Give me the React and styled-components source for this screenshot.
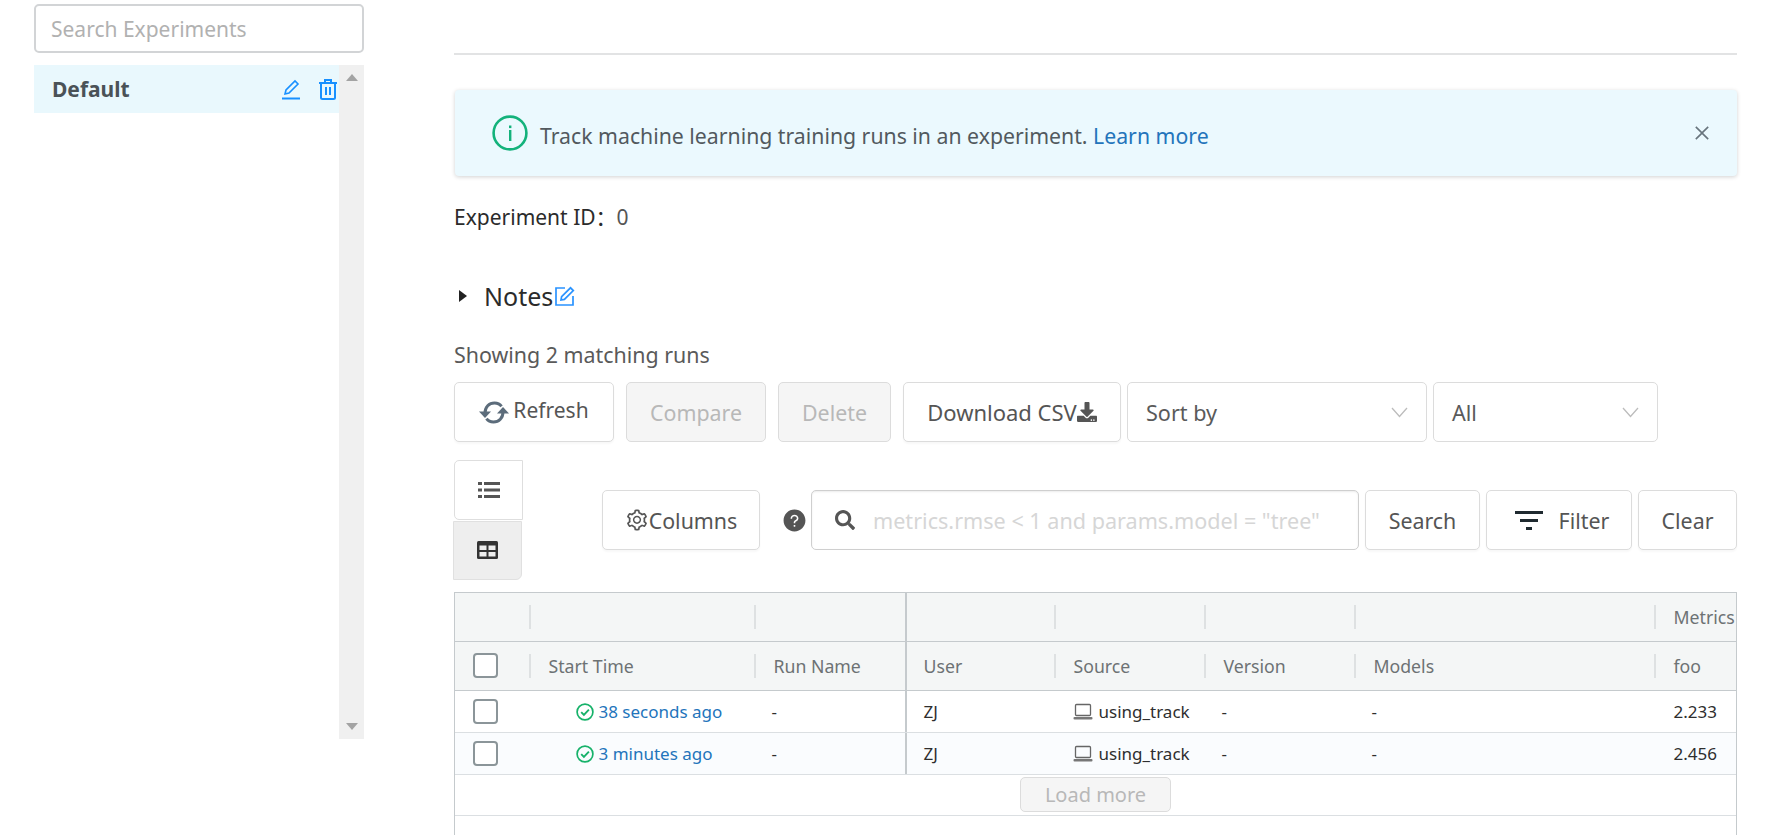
import React from "react";
import styled, { createGlobalStyle } from "styled-components";
import { FaDownload, FaSearch } from "react-icons/fa";
import { AiOutlineSetting, AiFillQuestionCircle, AiOutlineClose } from "react-icons/ai";

const Global = createGlobalStyle`
  html, body { margin: 0; padding: 0; background: #fff; }
  body { font-family: "Noto Sans", "Open Sans", sans-serif; color: #555; overflow: hidden; }
  * { box-sizing: border-box; }
`;

const Page = styled.div`
  display: flex; width: 1786px; height: 835px; padding-left: 34px; gap: 90px; overflow: hidden;
`;
const Sidebar = styled.aside`
  width: 330px; flex: none; padding-top: 4px; display: flex; flex-direction: column; gap: 12px;
`;
const SearchBox = styled.div`
  height: 49px; border: 2px solid #d2d4d6; border-radius: 5px; display: flex; align-items: center;
  padding-left: 15px; font-size: 21px; color: #b1b1b1; flex: none;
`;
const ListWrap = styled.div`
  display: flex; height: 674px; flex: none;
`;
const List = styled.div` flex: 1; min-width: 0; `;
const ListItem = styled.div`
  height: 48px; background: #e9f8fd; display: flex; align-items: center; padding-left: 18px;
  font-size: 21px; font-weight: 700; color: #4a5257;
`;
const ItemName = styled.span` flex: 1; `;
const ItemIcons = styled.span`
  display: flex; align-items: center; gap: 17px; color: #1890ff; padding-right: 1px;
`;
const Scrollbar = styled.div`
  width: 25px; background: #f0f0f0; display: flex; flex-direction: column; justify-content: space-between;
  align-items: center; padding: 9px 0 9px;
`;
const ScrollArrow = styled.i`
  width: 0; height: 0; border-left: 6px solid transparent; border-right: 6px solid transparent;
  ${p => p.$down ? "border-top: 7px solid #a3a3a3;" : "border-bottom: 7px solid #a3a3a3;"}
`;
const Main = styled.main`
  width: 1283px; flex: none; padding-top: 53px; display: flex; flex-direction: column;
  & > * { flex: none; }
`;
const Rule = styled.hr`
  margin: 0; height: 2px; border: 0; background: #e2e3e4;
`;
const Alert = styled.div`
  margin-top: 35px; height: 86px; background: #ebf9fe; border-radius: 4px; box-shadow: 0 1px 4px rgba(0,0,0,.18);
  display: flex; align-items: center; padding: 0 25px 0 37px; font-size: 21.25px; color: #52595e; margin-left: 1px;
`;
const AlertText = styled.span` flex: 1; margin-left: 12px; padding-top: 5px; `;
const LinkText = styled.a` color: #2374bb; `;
const CloseBtn = styled.span` display: flex; color: #68757d; `;
const ExpId = styled.div`
  margin-top: 27px; font-size: 21px; line-height: 27px; color: #2b2b2b; height: 27px;
`;
const ExpColon = styled.span` font-family: "Noto Sans CJK SC", sans-serif; `;
const ExpValue = styled.span` color: #555; `;
const Notes = styled.div`
  margin-top: 48px; height: 36px; display: flex; align-items: center; font-size: 25px; color: #2b2b2b;
`;
const Caret = styled.i`
  width: 0; height: 0; border-top: 6.5px solid transparent; border-bottom: 6.5px solid transparent;
  border-left: 8px solid #222; margin: 0 17px 0 5px;
`;
const NoteIconWrap = styled.span` display: flex; margin-left: 2px; `;
const Showing = styled.div`
  margin-top: 27px; height: 28px; line-height: 28px; font-size: 21.4px; color: #5a5a5a;
`;
const ToolRow = styled.div`
  margin-top: 13px; display: flex; height: 60px;
`;
const Btn = styled.button`
  font: inherit; font-size: ${p => p.$fs || 21.4}px; height: 60px; width: ${p => p.$w}px; margin-left: ${p => p.$ml || 0}px; flex: none;
  border: 1.5px solid #dcdcdc; border-radius: 5px; background: ${p => p.disabled ? "#f5f5f5" : "#fff"};
  color: ${p => p.disabled ? "#b8b8b8" : "#555"}; display: flex; align-items: center; justify-content: center;
  padding: 0; box-shadow: ${p => p.disabled ? "none" : "0 2px 2px rgba(0,0,0,.03)"};
`;
const RefreshLabel = styled.span` padding-bottom: 4px; margin-left: 4px; `;
const Select = styled.div`
  height: 60px; width: ${p => p.$w}px; margin-left: ${p => p.$ml}px; border: 1.5px solid #dcdcdc; border-radius: 5px;
  display: flex; align-items: center; justify-content: space-between; padding: 0 18px 0 18px; font-size: 21.6px; color: #5a5a5a;
`;
const SecondRow = styled.div`
  margin-top: 18px; display: flex; height: 120px; position: relative;
`;
const ViewToggle = styled.div`
  width: 70px; display: flex; flex-direction: column; flex: none;
`;
const ViewBtn = styled.div`
  width: 69px; height: 60px; display: flex; align-items: center; justify-content: center;
  border: 1.5px solid ${p => p.$active ? "#e0e0e0" : "#dedede"}; color: ${p => p.$active ? "#333" : "#555"};
  background: ${p => p.$active ? "#eee" : "#fff"};
  border-radius: ${p => p.$active ? "0 0 6px 0" : "5px 0 0 5px"};
  margin: ${p => p.$active ? "1px 0 0 -1px" : "0"};
`;
const FilterBar = styled.div`
  display: flex; align-items: flex-start; margin-left: 78px; padding-top: 30px;
`;
const Help = styled.span` display: flex; color: #555; margin: 18px 0 0 22px; `;
const QueryBox = styled.div`
  width: 548px; height: 60px; margin-left: 4px; border: 1.5px solid #cfcfcf; border-radius: 5px;
  box-shadow: inset 0 1px 2px rgba(0,0,0,.08); display: flex; align-items: center; padding-left: 23px;
  font-size: 21.6px; flex: none; color: #d6d6d6; white-space: nowrap;
`;
const QueryIcon = styled.span` display: flex; color: #555; margin-right: 18px; `;
const FilterIcon = styled.svg` margin: 0 16px 0 6px; `;
const Table = styled.div`
  margin-top: 12px; height: 260px; border: 1.5px solid #c5cacd; border-bottom: 0; position: relative;
`;
const Row = styled.div`
  display: grid; grid-template-columns: 74.5px 225px 150px 150px 150px 150px 300px 81px;
  height: ${p => p.$h}px; background: ${p => p.$bg || "#fff"}; border-bottom: 1.5px solid ${p => p.$line || "#dbdfe2"};
`;
const HeadCell = styled.div`
  position: relative; display: flex; align-items: center; padding-left: ${p => p.$pin ? 17 : 19}px; color: #6d7274; font-size: 17.7px; white-space: nowrap;
  ${p => p.$sep && `&::before { content: ""; position: absolute; left: -1px; top: 12px; bottom: 12px; width: 2px; background: #dee1e2; }`}
  ${p => p.$pin && `border-left: 2px solid #c5cacd;`}
`;
const Cell = styled.div`
  display: flex; align-items: center; white-space: nowrap; color: #2e2e2e; font-size: 17px;
  padding-left: ${p => p.$pl ?? 17}px;
  ${p => p.$pin && `border-left: 2px solid #c5cacd;`}
`;
const Check = styled.span`
  width: 25px; height: 25px; border: 2px solid #8b9599; border-radius: 4px; background: #fff; margin-left: 18px; display: block; flex: none;
`;
const CheckCell = styled.div` display: flex; align-items: center; `;
const RunLink = styled.span`
  display: flex; align-items: center; color: #2374bb; gap: 5px; font-size: 17px;
`;
const SourceIcon = styled.svg` margin-right: 6px; `;
const LoadRow = styled.div`
  height: 41px; border-bottom: 1.5px solid #dbdfe2; display: flex; justify-content: center; padding-top: 2px;
`;
const LoadBtn = styled.div`
  width: 151px; height: 35px; background: #f5f5f5; border: 1.5px solid #dcdcdc; border-radius: 5px;
  color: #b8b8b8; font-size: 20px; display: flex; align-items: center; justify-content: center;
`;

const Trash = () => (
  <svg width="20" height="22" viewBox="0 0 20 22" fill="none" stroke="#1890ff" strokeWidth="2">
    <path d="M1 5h18M7 5V2h6v3M3 5v14.5a1.5 1.5 0 0 0 1.5 1.5h11a1.5 1.5 0 0 0 1.5-1.5V5M8 9v8M12 9v8" />
  </svg>
);
const EditUnderlined = () => (
  <svg width="20" height="21" viewBox="0 0 20 21" fill="none" stroke="#1890ff" strokeWidth="1.6">
    <path d="M4 15l1-4L14 2l3 3-9 9z" /><path d="M1 19.5h18" strokeWidth="2" />
  </svg>
);
const NoteEdit = () => (
  <svg width="20" height="20" viewBox="0 0 20 20" fill="none" stroke="#2a93ff" strokeWidth="1.7">
    <path d="M10 2H1v17h17v-9" /><path d="M6 14l.6-3.4L15.5 1.8l2.8 2.8-8.9 8.8z" />
  </svg>
);
const InfoIcon = () => (
  <svg width="36" height="36" viewBox="0 0 36 36" fill="none">
    <circle cx="18" cy="18" r="16.4" stroke="#13b27b" strokeWidth="2.6" />
    <rect x="17" y="15" width="2.4" height="11" fill="#13b27b" /><rect x="17" y="10.5" width="2.4" height="2.6" fill="#13b27b" />
  </svg>
);
const RefreshIcon = () => (
  <svg width="30" height="25" viewBox="0 0 30 25" fill="none">
    <path d="M6 13C6 7 10 3 15.5 3c3 0 5.5 1.2 7 3.4" stroke="#5c6c7b" strokeWidth="3" />
    <path d="M24 12c0 6-4 10-9.5 10-3 0-5.5-1.2-7-3.4" stroke="#5c6c7b" strokeWidth="3" />
    <path d="M0 11.5h12L6 18z" fill="#5c6c7b" /><path d="M18 13.5h12L24 7z" fill="#5c6c7b" />
  </svg>
);
const Chevron = () => (
  <svg width="17" height="11" viewBox="0 0 17 11" fill="none" stroke="#bcbcbc" strokeWidth="1.3">
    <path d="M1 1l7.5 8.5L16 1" />
  </svg>
);
const ListIcon = () => (
  <svg width="22" height="18" viewBox="0 0 22 18" fill="#555">
    <rect x="0" y="1" width="4" height="3" /><rect x="6" y="1" width="16" height="3" />
    <rect x="0" y="7.5" width="4" height="3" /><rect x="6" y="7.5" width="16" height="3" />
    <rect x="0" y="14" width="4" height="3" /><rect x="6" y="14" width="16" height="3" />
  </svg>
);
const GridIcon = () => (
  <svg width="21" height="18" viewBox="0 0 21 18">
    <rect width="21" height="18" rx="1.5" fill="#333" />
    <rect x="2.5" y="4.5" width="7" height="4.5" fill="#eee" /><rect x="11.5" y="4.5" width="7" height="4.5" fill="#eee" />
    <rect x="2.5" y="11" width="7" height="4.5" fill="#eee" /><rect x="11.5" y="11" width="7" height="4.5" fill="#eee" />
  </svg>
);
const OkIcon = () => (
  <svg width="18" height="18" viewBox="0 0 18 18" fill="none" stroke="#17b26a" strokeWidth="1.7">
    <circle cx="9" cy="9" r="7.9" /><path d="M5.2 9.2l2.7 2.7 5-5.2" strokeWidth="1.9" />
  </svg>
);
const Laptop = () => (
  <SourceIcon width="20" height="17" viewBox="0 0 20 17" fill="none">
    <rect x="2.5" y="1.5" width="15" height="11" rx="1" stroke="#666" strokeWidth="1.3" />
    <rect x="0.5" y="14" width="19" height="2.4" rx="1" fill="#777" />
  </SourceIcon>
);

const Run = ({ ago, user, metric, bg }) => (
  <Row $h={42} $bg={bg}>
    <CheckCell><Check /></CheckCell>
    <Cell $pl={46}>
      <RunLink><OkIcon />{ago}</RunLink>
    </Cell>
    <Cell>-</Cell>
    <Cell $pin>{user}</Cell>
    <Cell $pl={18}><Laptop />using_track</Cell>
    <Cell>-</Cell>
    <Cell>-</Cell>
    <Cell $pl={19}>{metric}</Cell>
  </Row>
);

export default function App() {
  return (
    <Page>
      <Global />
      <Sidebar>
        <SearchBox>Search Experiments</SearchBox>
        <ListWrap>
          <List>
            <ListItem>
              <ItemName>Default</ItemName>
              <ItemIcons><EditUnderlined /><Trash /></ItemIcons>
            </ListItem>
          </List>
          <Scrollbar><ScrollArrow /><ScrollArrow $down /></Scrollbar>
        </ListWrap>
      </Sidebar>
      <Main>
        <Rule />
        <Alert>
          <InfoIcon />
          <AlertText>Track machine learning training runs in an experiment. <LinkText>Learn more</LinkText></AlertText>
          <CloseBtn><AiOutlineClose size={20} /></CloseBtn>
        </Alert>
        <ExpId>Experiment ID<ExpColon>：</ExpColon><ExpValue>0</ExpValue></ExpId>
        <Notes><Caret />Notes<NoteIconWrap><NoteEdit /></NoteIconWrap></Notes>
        <Showing>Showing 2 matching runs</Showing>
        <ToolRow>
          <Btn $w={160} $fs={21}><RefreshIcon /><RefreshLabel>Refresh</RefreshLabel></Btn>
          <Btn $w={140} $ml={12} disabled>Compare</Btn>
          <Btn $w={113} $ml={12} disabled>Delete</Btn>
          <Btn $w={218} $ml={12} $fs={22}>Download CSV<FaDownload size={20} /></Btn>
          <Select $w={300} $ml={6}>Sort by<Chevron /></Select>
          <Select $w={225} $ml={6}>All<Chevron /></Select>
        </ToolRow>
        <SecondRow>
          <ViewToggle>
            <ViewBtn><ListIcon /></ViewBtn>
            <ViewBtn $active><GridIcon /></ViewBtn>
          </ViewToggle>
          <FilterBar>
            <Btn $w={158}><AiOutlineSetting size={24} />Columns</Btn>
            <Help><AiFillQuestionCircle size={25} /></Help>
            <QueryBox>
              <QueryIcon><FaSearch size={20} /></QueryIcon>
              metrics.rmse &lt; 1 and params.model = "tree"
            </QueryBox>
            <Btn $w={115} $ml={6}>Search</Btn>
            <Btn $w={146} $ml={6}>
              <FilterIcon width="28" height="20" viewBox="0 0 28 20" fill="#1f2a30">
                <rect x="0" y="1" width="28" height="3" /><rect x="5" y="9" width="18" height="3" /><rect x="11" y="17" width="6" height="3" />
              </FilterIcon>
              Filter
            </Btn>
            <Btn $w={99} $ml={6}>Clear</Btn>
          </FilterBar>
        </SecondRow>
        <Table>
          <Row $h={48.5} $bg="#f4f6f6" $line="#c5cacd">
            <HeadCell /><HeadCell $sep /><HeadCell $sep /><HeadCell $pin /><HeadCell $sep /><HeadCell $sep /><HeadCell $sep />
            <HeadCell $sep>Metrics</HeadCell>
          </Row>
          <Row $h={49.5} $bg="#f4f6f6" $line="#c5cacd">
            <CheckCell><Check /></CheckCell>
            <HeadCell $sep>Start Time</HeadCell>
            <HeadCell $sep>Run Name</HeadCell>
            <HeadCell $pin>User</HeadCell>
            <HeadCell $sep>Source</HeadCell>
            <HeadCell $sep>Version</HeadCell>
            <HeadCell $sep>Models</HeadCell>
            <HeadCell $sep>foo</HeadCell>
          </Row>
          <Run ago="38 seconds ago" user="ZJ" metric="2.233" />
          <Run ago="3 minutes ago" user="ZJ" metric="2.456" bg="#fafcfe" />
          <LoadRow><LoadBtn>Load more</LoadBtn></LoadRow>
        </Table>
      </Main>
    </Page>
  );
}
